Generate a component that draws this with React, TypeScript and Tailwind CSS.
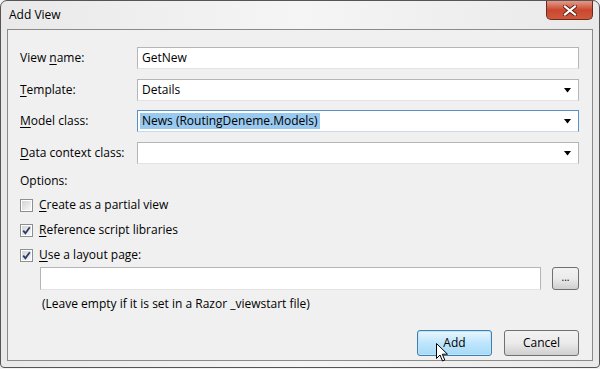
import React from "react";

const font = { fontFamily: '"Segoe UI", "Open Sans", "Noto Sans", sans-serif' };

function U({ c }: { c: string }) {
  return <span className="underline underline-offset-2">{c}</span>;
}

function Arrow() {
  return (
    <svg width="8" height="5" viewBox="0 0 8 5" className="mr-[6px]">
      <path d="M0 0 H7 L3.5 4.5 Z" fill="#000" />
    </svg>
  );
}

function Check({ checked }: { checked: boolean }) {
  return (
    <div className="w-[13px] h-[13px] border border-[#8e8f8f] bg-white flex items-center justify-center">
      <div className="w-[9px] h-[9px] bg-gradient-to-br from-[#d4d4d4] to-[#f7f7f7] flex items-center justify-center">
        {checked && (
          <svg width="9" height="9" viewBox="0 0 9 9">
            <path d="M1.2 4.6 L3.4 7.2 L7.8 1.2" stroke="#2a3b6e" strokeWidth="1.8" fill="none" />
          </svg>
        )}
      </div>
    </div>
  );
}

export default function App() {
  return (
    <div
      className="w-[600px] h-[369px] relative bg-[#f2f2f2] text-[12px] text-black overflow-hidden"
      style={font}
    >
      <div className="w-[600px] h-[368px] border border-[#555] rounded-t-[7px] rounded-b-[4px] bg-gradient-to-r from-[#e9e9e9] via-[#f5f5f5] to-[#e9e9e9] flex flex-col">
        {/* title bar */}
        <div className="h-[28px] flex items-start justify-between">
          <div className="pl-[8px] pt-[5px] text-[12px] text-black">Add View</div>
          <div className="mr-[6px] w-[47px] h-[19px] rounded-b-[5px] border border-[#6b2a1d] border-t-0 bg-gradient-to-b from-[#e4998a] via-[#c9472e] to-[#d0593c] flex items-center justify-center">
            <svg width="14" height="11" viewBox="0 0 14 11">
              <path d="M2 1.5 L12 9.5 M12 1.5 L2 9.5" stroke="#5a2015" strokeWidth="4" strokeLinecap="square" />
              <path d="M2 1.5 L12 9.5 M12 1.5 L2 9.5" stroke="#fff" strokeWidth="2.2" strokeLinecap="square" />
            </svg>
          </div>
        </div>
        {/* client */}
        <div className="mx-[6px] mb-[6px] flex-1 border border-[#8a8a8a] bg-[#f0f0f0] pl-[12px] pr-[13px] pt-[17px] flex flex-col">
          <div className="flex items-center h-[22px]">
            <div className="w-[117px]">View <U c="n" />ame:</div>
            <div className="flex-1 h-[22px] bg-white border border-[#b5b5b5] border-b-[#e3e3e3] flex items-center pl-[4px]">GetNew</div>
          </div>
          <div className="flex items-center h-[22px] mt-[10px]">
            <div className="w-[117px]"><U c="T" />emplate:</div>
            <div className="flex-1 h-[22px] bg-white border border-[#b5b5b5] border-b-[#e3e3e3] flex items-center justify-between pl-[4px]">
              <span>Details</span>
              <Arrow />
            </div>
          </div>
          <div className="flex items-center h-[22px] mt-[9px]">
            <div className="w-[117px]"><U c="M" />odel class:</div>
            <div className="flex-1 h-[22px] bg-white border border-[#5b8fc8] border-b-[#c5daed] flex items-center justify-between pl-[2px]">
              <span className="bg-[#99c9ef] px-[2px] leading-[16px]">News (RoutingDeneme.Models)</span>
              <Arrow />
            </div>
          </div>
          <div className="flex items-center h-[22px] mt-[10px]">
            <div className="w-[117px]"><U c="D" />ata context class:</div>
            <div className="flex-1 h-[22px] bg-white border border-[#b5b5b5] border-b-[#e3e3e3] flex items-center justify-end">
              <Arrow />
            </div>
          </div>
          <div className="mt-[9px] h-[16px] leading-[16px]">Options:</div>
          <div className="mt-[8px] flex items-center gap-[6px] h-[16px]">
            <Check checked={false} />
            <span><U c="C" />reate as a partial view</span>
          </div>
          <div className="mt-[9px] flex items-center gap-[6px] h-[16px]">
            <Check checked={true} />
            <span><U c="R" />eference script libraries</span>
          </div>
          <div className="mt-[9px] flex items-center gap-[6px] h-[16px]">
            <Check checked={true} />
            <span><U c="U" />se a layout page:</span>
          </div>
          <div className="mt-[4px] ml-[20px] flex items-center">
            <div className="flex-1 h-[23px] bg-white border border-[#b5b5b5] border-b-[#e3e3e3]" />
            <div className="ml-[11px] w-[27px] h-[23px] rounded-[3px] border border-[#707070] bg-gradient-to-b from-[#f2f2f2] via-[#ebebeb] to-[#cfcfcf] flex items-center justify-center text-[10px] leading-none pb-[3px]">
              ...
            </div>
          </div>
          <div className="mt-[6px] ml-[22px] h-[16px] leading-[16px]">(Leave empty if it is set in a Razor _viewstart file)</div>
          <div className="mt-[18px] flex justify-end gap-[12px]">
            <div className="relative w-[75px] h-[26px] rounded-[3px] border border-[#3c7fb1] bg-gradient-to-b from-[#eaf6fd] via-[#bee6fd] to-[#a7d9f5] shadow-[inset_0_0_0_1px_#c2e4f6] flex items-center justify-center">
              Add
              <svg className="absolute left-[18px] top-[12px]" width="13" height="20" viewBox="0 0 13 20">
                <path d="M0.5 0.5 L0.5 15.5 L4 12 L6.5 18 L8.8 17 L6.3 11.2 L11.5 11.2 Z" fill="#fff" stroke="#000" strokeWidth="1" strokeLinejoin="round" />
              </svg>
            </div>
            <div className="w-[75px] h-[26px] rounded-[3px] border border-[#707070] bg-gradient-to-b from-[#f2f2f2] via-[#ebebeb] to-[#cfcfcf] flex items-center justify-center">
              Cancel
            </div>
          </div>
        </div>
      </div>
    </div>
  );
}
